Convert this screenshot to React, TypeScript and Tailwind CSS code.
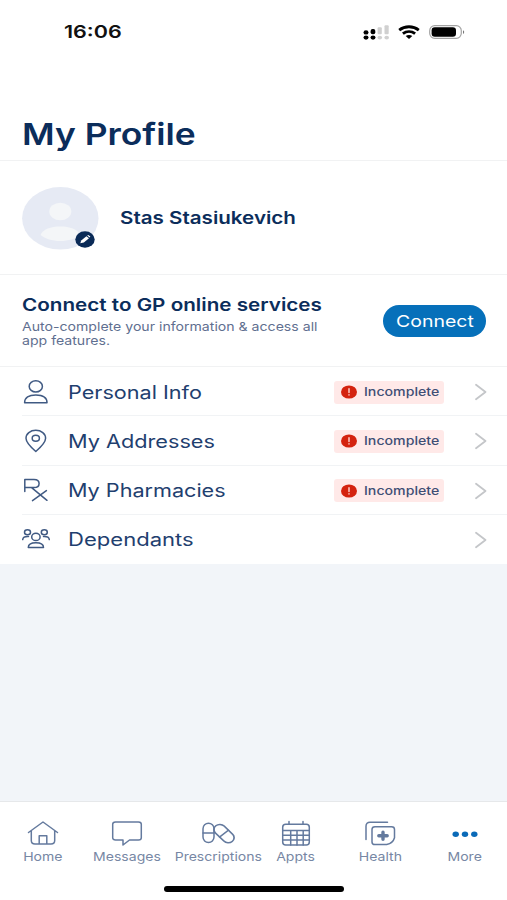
import type { ReactNode } from "react";

interface WideProps {
	children: ReactNode;
	className?: string;
}

/** Extended-width lettering, shared by every label on the screen */
function Wide({ children, className = "" }: WideProps) {
	return (
		<span className={`inline-block whitespace-nowrap ${className}`}>
			{children}
		</span>
	);
}

interface IconProps {
	width: number;
	height: number;
	children: ReactNode;
	className?: string;
}

function Icon({ width, height, children, className = "" }: IconProps) {
	return (
		<svg
			width={width}
			height={height}
			viewBox={`0 0 ${width} ${height}`}
			fill="none"
			stroke="currentColor"
			strokeWidth="1.5"
			strokeLinecap="round"
			strokeLinejoin="round"
			className={`shrink-0 ${className}`}
		>
			{children}
		</svg>
	);
}

function StatusBar() {
	return (
		<div className="flex h-[63px] items-center justify-between pr-[42px] pl-[64px] text-[#111]">
			<Wide className="mt-[1px] origin-left scale-x-[1.23] text-[17.5px] font-semibold">
				16:06
			</Wide>
			<div className="flex items-center">
				<Icon width={27} height={16}>
					<g fill="#000" stroke="none">
						<ellipse cx="3" cy="8.4" rx="2.5" ry="2.2" />
						<ellipse cx="3" cy="13.6" rx="2.5" ry="2.1" />
						<rect x="7.6" y="4.9" width="4.7" height="5.4" rx="2" />
						<ellipse cx="10" cy="13.6" rx="2.5" ry="2.1" />
					</g>
					<g fill="#d0d0d0" stroke="none">
						<rect x="14.6" y="3.2" width="4.2" height="7" rx="1" />
						<ellipse cx="16.8" cy="13.6" rx="2.3" ry="1.9" />
						<rect x="21.5" y="1.2" width="4.2" height="9" rx="1" />
						<ellipse cx="23.7" cy="13.6" rx="2.3" ry="1.9" />
					</g>
				</Icon>
				<Icon width={22} height={14} className="ml-[8px]">
					<g stroke="#000" strokeWidth="2.8" strokeLinecap="butt">
						<path d="M1.2 5.1C6.8.6 15.200.6 20.800 5.1" />
						<path d="M4.900 8.700c3.600-2.900 8.600-2.900 12.200 0" />
					</g>
					<path
						d="M7.700 11.100c1.900-1.500 4.700-1.500 6.600 0L11 13.900z"
						fill="#000"
						stroke="none"
					/>
				</Icon>
				<Icon width={36} height={14} className="ml-[9px]">
					<rect x=".7" y=".7" width="31.6" height="12.6" rx="5" stroke="#a3a3a3" strokeWidth="1.2" />
					<rect x="2.6" y="2.2" width="24.4" height="9.6" rx="3.2" fill="#000" stroke="none" />
					<path d="M34 5.2c1.6.5 1.6 3.2 0 3.7z" fill="#777" stroke="none" />
				</Icon>
			</div>
		</div>
	);
}

function Avatar() {
	return (
		<div className="relative mt-[1px] h-[63px] w-[77px]">
			<Icon width={77} height={63}>
				<g stroke="none">
					<ellipse cx="38.3" cy="31.3" rx="38.2" ry="31.2" fill="#e6eaf4" />
					<ellipse cx="38.3" cy="24.5" rx="11" ry="8.8" fill="#f4f6f8" />
					<path
						d="M18.5 48c2.2-6 10.5-8.6 19.8-8.6s17.6 2.6 19.8 8.6c-4.6 3.7-11.6 6-19.8 6s-15.2-2.300-19.800-6z"
						fill="#f4f6f8"
					/>
				</g>
			</Icon>
			<div className="absolute top-[44px] left-[53px]">
				<Icon width={20} height={17}>
					<ellipse cx="10" cy="8.5" rx="9.7" ry="8.3" fill="#0a2a57" stroke="none" />
					<path d="M5.300 12.300l.9-2.900 5.200-4.200 2.600 2-5.200 4.200z" fill="#fff" stroke="none" />
					<path d="M12.200 4.600l1-.7 2.200 1.700-.9.800z" fill="#fff" stroke="none" />
				</Icon>
			</div>
		</div>
	);
}

const rows = [
	{
		label: "Personal Info",
		incomplete: true,
		scale: "scale-x-[1.2]",
		icon: (
			<Icon width={28} height={26}>
				<ellipse cx="13.8" cy="7.4" rx="6.6" ry="5.7" />
				<path d="M2.600 23.800c0-5.500 4.200-7.800 11.200-7.800s11.200 2.300 11.200 7.800z" />
			</Icon>
		),
	},
	{
		label: "My Addresses",
		incomplete: true,
		scale: "scale-x-[1.205]",
		icon: (
			<Icon width={28} height={26}>
				<path d="M13.800 23.500C8 18.500 4 14.400 4 10.300 4 5.700 8.300 2.300 13.800 2.300s9.800 3.400 9.800 8c0 4.100-4 8.200-9.800 13.200z" />
				<ellipse cx="13.8" cy="10.2" rx="3.6" ry="3" />
			</Icon>
		),
	},
	{
		label: "My Pharmacies",
		incomplete: true,
		scale: "scale-x-[1.2]",
		icon: (
			<Icon width={28} height={26}>
				<path d="M2.800 14.400V2.400h9.200c6.800 0 6.800 8.200 0 8.200H2.800M9.600 10.600L25 23.300M24.400 13.600L10.500 23.600" />
			</Icon>
		),
	},
	{
		label: "Dependants",
		incomplete: false,
		scale: "scale-x-[1.225]",
		icon: (
			<Icon width={28} height={26}>
				<ellipse cx="5.5" cy="6.3" rx="3" ry="2.5" />
				<ellipse cx="22.3" cy="6.3" rx="3" ry="2.5" />
				<ellipse cx="13.9" cy="10.9" rx="4.2" ry="3.6" />
				<path d="M6.300 21.600c0-3.800 3.100-4.800 7.600-4.800s7.600 1 7.600 4.800zM.7 13.600c.2-2.500 2.300-3.300 5.800-3.100M27.300 13.600c-.2-2.500-2.300-3.300-5.800-3.100" />
			</Icon>
		),
	},
];

function IncompleteBadge() {
	return (
		<div className="flex h-[23px] w-[110px] items-center rounded-[3px] bg-[#ffe9e8] pl-[7px]">
			<Icon width={16} height={14}>
				<ellipse cx="8" cy="7" rx="8" ry="6.6" fill="#d4230f" stroke="none" />
				<path d="M8 3.800v3.800M8 9.700v.3" stroke="#ffd9d4" strokeWidth="1.4" />
			</Icon>
			<Wide className="ml-[7px] origin-left scale-x-[1.18] text-[12px] font-medium text-[#3f4f75]">
				Incomplete
			</Wide>
		</div>
	);
}

const tabs = [
	{
		label: "Home",
		icon: (
			<Icon width={32} height={26}>
				<path d="M1.500 12.500L16 2l14.500 10.500M4.300 10.800v9.700c0 2.400 1.300 3.500 3.700 3.500h16c2.400 0 3.700-1.100 3.700-3.500v-9.700M12.200 24v-8.300h7.600V24" />
			</Icon>
		),
	},
	{
		label: "Messages",
		icon: (
			<Icon width={32} height={26}>
				<path d="M4.500 2h23c1.700 0 2.800.9 2.800 2.300v13.400c0 1.400-1.100 2.300-2.800 2.300H18.500L12 25v-5H4.500c-1.700 0-2.800-.9-2.800-2.300V4.300C1.700 2.900 2.800 2 4.500 2z" />
			</Icon>
		),
	},
	{
		label: "Prescriptions",
		icon: (
			<Icon width={34} height={26}>
				<rect x="2" y="3.2" width="11" height="19.4" rx="5.5" />
				<path d="M2 12.900h11" />
				<g transform="translate(23 13.600) scale(1.15 1) rotate(-42)">
					<rect x="-5.1" y="-10.6" width="10.2" height="21.2" rx="5.1" />
					<path d="M-5.100 0h10.200" />
				</g>
			</Icon>
		),
	},
	{
		label: "Appts",
		icon: (
			<Icon width={32} height={26}>
				<rect x="2.7" y="4.2" width="26.6" height="20.800" rx="3" />
				<path d="M2.700 10.500h26.600M2.700 15.300h26.600M2.700 20.100h26.600M10.700 10.500V25M17 10.500V25M23.200 10.500V25M9 1.500v2.700M23 1.500v2.700" />
			</Icon>
		),
	},
	{
		label: "Health",
		icon: (
			<Icon width={32} height={26}>
				<path d="M2 19.500V6.200C2 3.700 3.500 2.200 6 2.200h17.500" />
				<path d="M11 6.800h16.500c2 0 3 .9 3 2.600v8.300c-1 3.700-4.200 6-7.800 6.800H11c-2 0-3-.9-3-2.600V9.400c0-1.700 1-2.600 3-2.600z" />
				<path d="M19 12.300v7M14.800 15.800h8.400" strokeWidth="3.4" />
			</Icon>
		),
	},
	{
		label: "More",
		icon: (
			<Icon width={32} height={26} className="text-[#0a6ab8]">
				<g fill="currentColor" stroke="none">
					<ellipse cx="6.7" cy="14.2" rx="3.2" ry="2.7" />
					<ellipse cx="16" cy="14.2" rx="3.2" ry="2.7" />
					<ellipse cx="25.3" cy="14.2" rx="3.2" ry="2.7" />
				</g>
			</Icon>
		),
	},
];

function TabBar() {
	return (
		<nav className="h-[99px] border-t border-[#e6e8ea] bg-white">
			<div className="grid h-[82px] grid-cols-[85px_84px_98px_58px_110px_60px] pt-[18px]">
				{tabs.map((tab) => (
					<div
						key={tab.label}
						className="flex flex-col items-center text-[#647a9e]"
					>
						{tab.icon}
						<Wide className="mt-[2px] scale-x-[1.17] text-[12px] leading-[18px] text-[#7787a4]">
							{tab.label}
						</Wide>
					</div>
				))}
			</div>
			<div className="mt-[2px] ml-[164px] h-[6px] w-[180px] rounded-full bg-black" />
		</nav>
	);
}

export default function App() {
	return (
		<div className="flex h-[900px] w-[507px] flex-col overflow-hidden bg-[#f2f5f9] font-['Inter',sans-serif] text-[#0b2d5b]">
			<header className="h-[161px] border-b border-[#f1f2f3] bg-white">
				<StatusBar />
				<h1 className="mt-[52px] pl-[22px] text-[30px] leading-[38px] font-semibold">
					<Wide className="origin-left scale-x-[1.18]">My Profile</Wide>
				</h1>
			</header>

			<section className="flex h-[114px] items-center gap-[21px] border-b border-[#f1f2f3] bg-white pl-[22px]">
				<Avatar />
				<Wide className="mt-[2px] origin-left scale-x-[1.21] text-[17px] font-semibold">
					Stas Stasiukevich
				</Wide>
			</section>

			<section className="flex h-[92px] items-center justify-between border-b border-[#f1f2f3] bg-white pr-[21px] pl-[22px]">
				<div>
					<h2 className="text-[17.5px] leading-[24px] font-semibold">
						<Wide className="origin-left scale-x-[1.18]">
							Connect to GP online services
						</Wide>
					</h2>
					<p className="mt-[3px] text-[12px] leading-[14px] text-[#5f6f90]">
						<Wide className="origin-left scale-x-[1.175]">
							Auto-complete your information &amp; access all
							<br />
							app features.
						</Wide>
					</p>
				</div>
				<button className="mt-[1px] flex h-[32px] w-[103px] items-center justify-center rounded-full bg-[#0670ba] text-white">
					<Wide className="mt-[1px] scale-x-[1.18] text-[16.5px]">Connect</Wide>
				</button>
			</section>

			<ul className="h-[197px] bg-white">
				{rows.map((row) => (
					<li key={row.label} className="group flex h-[49.25px] items-center pl-[22px] text-[#405a83]">
						{row.icon}
						<div className="-ml-[28px] flex h-full flex-1 items-center justify-between border-b border-[#f1f3f5] pt-[2px] pr-[20px] pl-[46px] group-last:border-transparent">
							<Wide className={`origin-left text-[18px] ${row.scale} text-[#1f406f]`}>
								{row.label}
							</Wide>
							<div className="flex items-center gap-[30px]">
								{row.incomplete && <IncompleteBadge />}
								<Icon width={13} height={18} className="text-[#c4c6c9]">
									<path d="M2 1.800l9.500 7.200L2 16.200" strokeWidth="1.8" />
								</Icon>
							</div>
						</div>
					</li>
				))}
			</ul>

			<main className="flex-1" />
			<TabBar />
		</div>
	);
}
